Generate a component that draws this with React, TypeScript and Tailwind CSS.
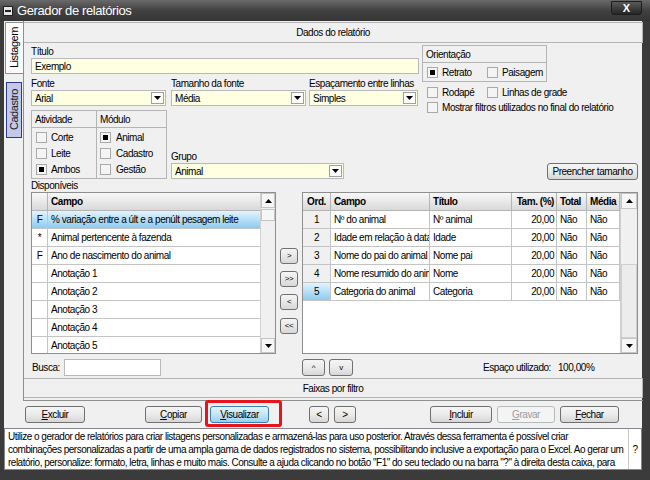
import type { ReactNode } from 'react';

const leftRows = [
  { k: 'F', t: '% variação entre a últ e a penúlt pesagem leite', sel: true },
  { k: '*', t: 'Animal pertencente à fazenda' },
  { k: 'F', t: 'Ano de nascimento do animal' },
  { k: '', t: 'Anotação 1' },
  { k: '', t: 'Anotação 2' },
  { k: '', t: 'Anotação 3' },
  { k: '', t: 'Anotação 4' },
  { k: '', t: 'Anotação 5' },
];

const rightRows = [
  { n: '1', c: 'Nº do animal', t: 'Nº animal' },
  { n: '2', c: 'Idade em relação à data', t: 'Idade' },
  { n: '3', c: 'Nome do pai do animal', t: 'Nome pai' },
  { n: '4', c: 'Nome resumido do animal', t: 'Nome' },
  { n: '5', c: 'Categoria do animal', t: 'Categoria', sel: true },
];

function Tri({ up }: { up?: boolean }) {
  return (
    <svg width="7" height="4" viewBox="0 0 7 4" className={up ? 'rotate-180' : ''}>
      <path d="M0 0H7L3.5 4Z" fill="#000" />
    </svg>
  );
}

function Check({ on }: { on?: boolean }) {
  return (
    <span className="flex h-[11px] w-[11px] shrink-0 items-center justify-center border border-[#a9a9a9] bg-[#f4f4f4]">
      {on && <span className="h-[5px] w-[5px] bg-black" />}
    </span>
  );
}

function CheckItem({ on, label, className = '' }: { on?: boolean; label: string; className?: string }) {
  return (
    <div className={`flex items-center gap-[4px] ${className}`}>
      <Check on={on} />
      <span>{label}</span>
    </div>
  );
}

function Combo({ value }: { value: string }) {
  return (
    <div className="flex h-[16px] w-full items-center border border-[#b9b9b9] bg-[#ffffe1] pl-[3px] pr-[1px]">
      <span className="flex-1 truncate">{value}</span>
      <span className="flex h-[12px] w-[13px] items-center justify-center border border-[#a0a0a0] bg-white">
        <Tri />
      </span>
    </div>
  );
}

function Btn({
  children,
  className = '',
  disabled,
  active,
}: {
  children: ReactNode;
  className?: string;
  disabled?: boolean;
  active?: boolean;
}) {
  const look = active
    ? 'border-[#3c7fb1] bg-linear-to-b from-[#e5f4fc] via-[#c4e5f6] to-[#98d1ef]'
    : disabled
      ? 'border-[#b5b9bc] bg-[#f4f4f4] text-[#9d9d9d]'
      : 'border-[#707070] bg-linear-to-b from-[#f5f5f5] via-[#ebebeb] to-[#d6d6d6]';
  return (
    <div className={`flex h-[17px] shrink-0 items-center justify-center rounded-[3px] border ${look} ${className}`}>
      {children}
    </div>
  );
}

function SmallBtn({ children }: { children: ReactNode }) {
  return (
    <div className="flex h-[16px] w-[18px] items-center justify-center rounded-[3px] border border-[#707070] bg-linear-to-b from-[#f5f5f5] to-[#d8d8d8] text-[8px] leading-none">
      {children}
    </div>
  );
}

function ScrollArrow({ up, className = '' }: { up?: boolean; className?: string }) {
  return (
    <div className={`flex shrink-0 items-center justify-center border border-[#c5c5c5] bg-[#f6f6f6] ${className}`}>
      <Tri up={up} />
    </div>
  );
}

function Underline({ ch, rest }: { ch: string; rest: string }) {
  return (
    <span>
      <span className="underline">{ch}</span>
      {rest}
    </span>
  );
}

const headCell = 'flex h-full items-center border-r border-[#b4b4b4] font-bold';
const cell = 'flex h-full items-center overflow-hidden border-r border-[#c4c4c4]';
const selBg = 'bg-linear-to-b from-[#e3f3fd] via-[#b8e0f8] to-[#8ecaf0]';

export default function App() {
  return (
    <div className="flex h-[480px] w-[650px] flex-col whitespace-nowrap bg-[#3b3b3b] font-['Liberation_Sans',Arial,sans-serif] text-[10px] tracking-[-0.45px] text-black">
      {/* title bar */}
      <div className="flex h-[21px] shrink-0 items-center bg-linear-to-b from-[#6a6a6a] via-[#414141] to-[#353535]">
        <div className="ml-[3px] flex h-[10px] w-[10px] items-center justify-center border border-[#222] bg-[#e6e6e6]">
          <div className="h-[2px] w-[6px] bg-[#222]" />
        </div>
        <span className="ml-[4px] text-[13px] leading-none tracking-[-0.4px] text-white">Gerador de relatórios</span>
        <div className="mr-[8px] mb-[5px] ml-auto flex h-[14px] w-[31px] items-center justify-center rounded-b-[3px] border border-[#1c1c1c] bg-linear-to-b from-[#5a5a5a] to-[#262626] text-[11px] font-bold leading-none tracking-normal text-white">
          X
        </div>
      </div>

      {/* body */}
      <div className="mb-[10px] ml-[4px] mr-[8px] flex flex-1 flex-col bg-[#f0f0f0]">
        <div className="flex h-[380px] shrink-0">
          {/* tabs */}
          <div className="flex w-[19px] shrink-0 flex-col items-end">
            <div className="mt-[1px] flex h-[52px] w-[18px] items-center justify-center border-y border-l border-[#8e8f8f] bg-[#fbfbfb]">
              <span className="rotate-180 text-[11px] [writing-mode:vertical-rl]">Listagem</span>
            </div>
            <div className="mt-[8px] mr-[1px] flex h-[56px] w-[16px] items-center justify-center border-[1.5px] border-[#2e3a92] bg-[#c3c9e6]">
              <span className="rotate-180 text-[11px] text-[#1a1a1a] [writing-mode:vertical-rl]">Cadastro</span>
            </div>
          </div>

          {/* main panel */}
          <div className="flex flex-1 flex-col border-b border-l border-[#8e8f8f]">
            <div className="mt-[1px] flex h-[21px] shrink-0 items-center justify-center border-y border-r border-[#b4b4b4]">
              Dados do relatório
            </div>

            <div className="flex flex-1 flex-col pt-[2px] pr-[5px] pl-[7px]">
              {/* top form */}
              <div className="flex h-[135px] shrink-0">
                <div className="flex w-[388px] flex-col">
                  <div className="h-[13px] leading-[13px]">Título</div>
                  <div className="flex h-[16px] items-center border border-[#b9b9b9] bg-[#ffffe1] pl-[3px]">Exemplo</div>
                  <div className="mt-[3px] flex">
                    <div className="flex w-[135px] flex-col">
                      <div className="h-[13px] leading-[13px]">Fonte</div>
                      <Combo value="Arial" />
                    </div>
                    <div className="ml-[5px] flex w-[135px] flex-col">
                      <div className="h-[13px] leading-[13px]">Tamanho da fonte</div>
                      <Combo value="Média" />
                    </div>
                    <div className="ml-[3px] flex w-[109px] flex-col">
                      <div className="h-[13px] leading-[13px]">Espaçamento entre linhas</div>
                      <Combo value="Simples" />
                    </div>
                  </div>
                  <div className="mt-[4px] flex">
                    <div className="flex h-[69px] w-[136px] flex-col border border-[#b4b4b4]">
                      <div className="flex h-[17px] border-b border-[#b4b4b4]">
                        <div className="flex w-[65px] items-center border-r border-[#b4b4b4] pl-[3px]">Atividade</div>
                        <div className="flex items-center pl-[3px]">Módulo</div>
                      </div>
                      <div className="flex flex-1">
                        <div className="flex w-[65px] flex-col border-r border-[#b4b4b4] pt-[1px] pl-[4px]">
                          <CheckItem label="Corte" className="h-[16px]" />
                          <CheckItem label="Leite" className="h-[16px]" />
                          <CheckItem on label="Ambos" className="h-[16px]" />
                        </div>
                        <div className="flex flex-col pt-[1px] pl-[3px]">
                          <CheckItem on label="Animal" className="h-[16px] gap-[5px]" />
                          <CheckItem label="Cadastro" className="h-[16px] gap-[5px]" />
                          <CheckItem label="Gestão" className="h-[16px] gap-[5px]" />
                        </div>
                      </div>
                    </div>
                    <div className="ml-[4px] flex w-[173px] flex-col self-end">
                      <div className="h-[13px] leading-[13px]">Grupo</div>
                      <Combo value="Animal" />
                    </div>
                  </div>
                </div>

                <div className="ml-[3px] flex flex-1 flex-col">
                  <div className="flex h-[37px] w-[125px] flex-col border border-[#b4b4b4]">
                    <div className="flex h-[17px] items-center border-b border-[#b4b4b4] pl-[3px]">Orientação</div>
                    <div className="flex flex-1 items-center pl-[4px]">
                      <CheckItem on label="Retrato" className="w-[60px]" />
                      <CheckItem label="Paisagem" />
                    </div>
                  </div>
                  <div className="mt-[3px] flex h-[14px] items-center pl-[5px]">
                    <CheckItem label="Rodapé" className="w-[60px]" />
                    <CheckItem label="Linhas de grade" />
                  </div>
                  <div className="mt-[1px] flex h-[14px] items-center pl-[5px]">
                    <CheckItem label="Mostrar filtros utilizados no final do relatório" />
                  </div>
                  <Btn className="mt-auto w-[91px] self-end">Preencher tamanho</Btn>
                </div>
              </div>

              <div className="h-[12px] leading-[12px]">Disponíveis</div>

              {/* grids */}
              <div className="flex h-[162px] shrink-0">
                <div className="flex w-[245px] border border-[#8e8f8f] bg-white">
                  <div className="flex flex-1 flex-col overflow-hidden">
                    <div className="flex h-[18px] shrink-0 border-b border-[#b4b4b4] bg-linear-to-b from-[#f8f8f8] to-[#d9d9d9]">
                      <div className={`${headCell} w-[16px]`} />
                      <div className="flex flex-1 items-center pl-[3px] font-bold">Campo</div>
                    </div>
                    {leftRows.map((r) => (
                      <div key={r.t} className={`flex h-[18px] shrink-0 border-b border-[#c4c4c4] ${r.sel ? selBg : ''}`}>
                        <div className={`${cell} w-[16px] justify-center`}>{r.k}</div>
                        <div className="flex flex-1 items-center overflow-hidden pl-[3px]">{r.t}</div>
                      </div>
                    ))}
                  </div>
                  <div className="flex w-[15px] flex-col border-l border-[#d0d0d0] bg-[#f0f0f0]">
                    <ScrollArrow up className="h-[15px]" />
                    <div className="mt-[1px] h-[12px] border border-[#c5c5c5] bg-[#f6f6f6]" />
                    <div className="flex-1" />
                    <ScrollArrow className="h-[15px]" />
                  </div>
                </div>

                <div className="flex w-[26px] flex-col gap-[7px] pt-[56px] pl-[4px]">
                  <SmallBtn>&gt;</SmallBtn>
                  <SmallBtn>&gt;&gt;</SmallBtn>
                  <SmallBtn>&lt;</SmallBtn>
                  <div className="mt-[1px]">
                    <SmallBtn>&lt;&lt;</SmallBtn>
                  </div>
                </div>

                <div className="flex flex-1 border border-[#8e8f8f] bg-white">
                  <div className="flex flex-1 flex-col overflow-hidden">
                    <div className="flex h-[18px] shrink-0 border-b border-[#b4b4b4] bg-linear-to-b from-[#f8f8f8] to-[#d9d9d9]">
                      <div className={`${headCell} w-[28px] justify-center`}>Ord.</div>
                      <div className={`${headCell} w-[99px] pl-[3px]`}>Campo</div>
                      <div className={`${headCell} w-[82px] pl-[3px]`}>Título</div>
                      <div className={`${headCell} w-[45px] justify-end pr-[2px]`}>Tam. (%)</div>
                      <div className={`${headCell} w-[30px] pl-[3px]`}>Total</div>
                      <div className={`${headCell} w-[33px] pl-[3px]`}>Média</div>
                    </div>
                    {rightRows.map((r) => (
                      <div key={r.n} className="flex h-[18px] shrink-0 border-b border-[#c4c4c4]">
                        <div className={`${cell} w-[28px] justify-center ${r.sel ? selBg : 'bg-[#f0f0f0]'}`}>{r.n}</div>
                        <div className={`${cell} w-[99px] pl-[3px]`}>{r.c}</div>
                        <div className={`${cell} w-[82px] pl-[3px]`}>{r.t}</div>
                        <div className={`${cell} w-[45px] justify-end pr-[2px]`}>20,00</div>
                        <div className={`${cell} w-[30px] pl-[3px]`}>Não</div>
                        <div className={`${cell} w-[33px] pl-[3px]`}>Não</div>
                      </div>
                    ))}
                  </div>
                  <div className="flex w-[17px] flex-col border-l border-[#d0d0d0] bg-[#f0f0f0]">
                    <ScrollArrow up className="h-[16px]" />
                    <div className="h-[55px]" />
                    <div className="flex-1 border border-[#cfcfcf] bg-[#ececec]" />
                    <ScrollArrow className="h-[15px]" />
                  </div>
                </div>
              </div>

              {/* bottom row */}
              <div className="mt-[5px] flex h-[17px] shrink-0 items-center">
                <div className="flex w-[271px] items-center">
                  <span className="w-[33px] pl-[1px]">Busca:</span>
                  <div className="h-[17px] w-[97px] border border-[#b9b9b9] bg-white" />
                </div>
                <Btn className="h-[16px] w-[23px] text-[8px]">^</Btn>
                <Btn className="ml-[4px] h-[16px] w-[24px] text-[8px]">v</Btn>
                <span className="ml-[130px] w-[75px]">Espaço utilizado:</span>
                <span>100,00%</span>
              </div>
            </div>

            <div className="mb-[2px] flex h-[20px] shrink-0 items-center justify-center border-y border-r border-[#b4b4b4]">
              Faixas por filtro
            </div>
          </div>
        </div>

        {/* button bar */}
        <div className="flex h-[27px] shrink-0 items-center">
          <Btn className="ml-[21px] w-[60px]">
            <Underline ch="E" rest="xcluir" />
          </Btn>
          <Btn className="ml-[60px] w-[57px]">
            <Underline ch="C" rest="opiar" />
          </Btn>
          <div className="relative ml-[8px]">
            <Btn active className="w-[59px]">
              <Underline ch="V" rest="isualizar" />
            </Btn>
            <div className="absolute top-[-6px] left-[-5px] h-[27px] w-[77px] rounded-[3px] border-[3px] border-[#e8141b]" />
          </div>
          <Btn className="ml-[40px] w-[20px]">&lt;</Btn>
          <Btn className="ml-[5px] w-[22px]">&gt;</Btn>
          <Btn className="ml-[74px] w-[62px]">
            <Underline ch="I" rest="ncluir" />
          </Btn>
          <Btn disabled className="ml-[5px] w-[58px]">
            <Underline ch="G" rest="ravar" />
          </Btn>
          <Btn className="ml-[5px] w-[59px]">
            <Underline ch="F" rest="echar" />
          </Btn>
        </div>

        {/* help box */}
        <div className="flex h-[42px] shrink-0 border border-[#828790] bg-white">
          <div className="flex-1 overflow-hidden pt-[1px] pl-[3px] leading-[13px] tracking-[-0.5px]">
            <div>
              Utilize o gerador de relatórios para criar listagens personalizadas e armazená-las para uso posterior. Através dessa ferramenta é possível criar
            </div>
            <div>
              combinações personalizadas a partir de uma ampla gama de dados registrados no sistema, possibilitando inclusive a exportação para o Excel. Ao gerar um
            </div>
            <div>
              relatório, personalize: formato, letra, linhas e muito mais. Consulte a ajuda clicando no botão &quot;F1&quot; do seu teclado ou na barra &quot;?&quot; à direita desta caixa, para
            </div>
          </div>
          <div className="flex w-[13px] items-center justify-center border-l border-[#c8c8c8]">?</div>
        </div>
      </div>
    </div>
  );
}
